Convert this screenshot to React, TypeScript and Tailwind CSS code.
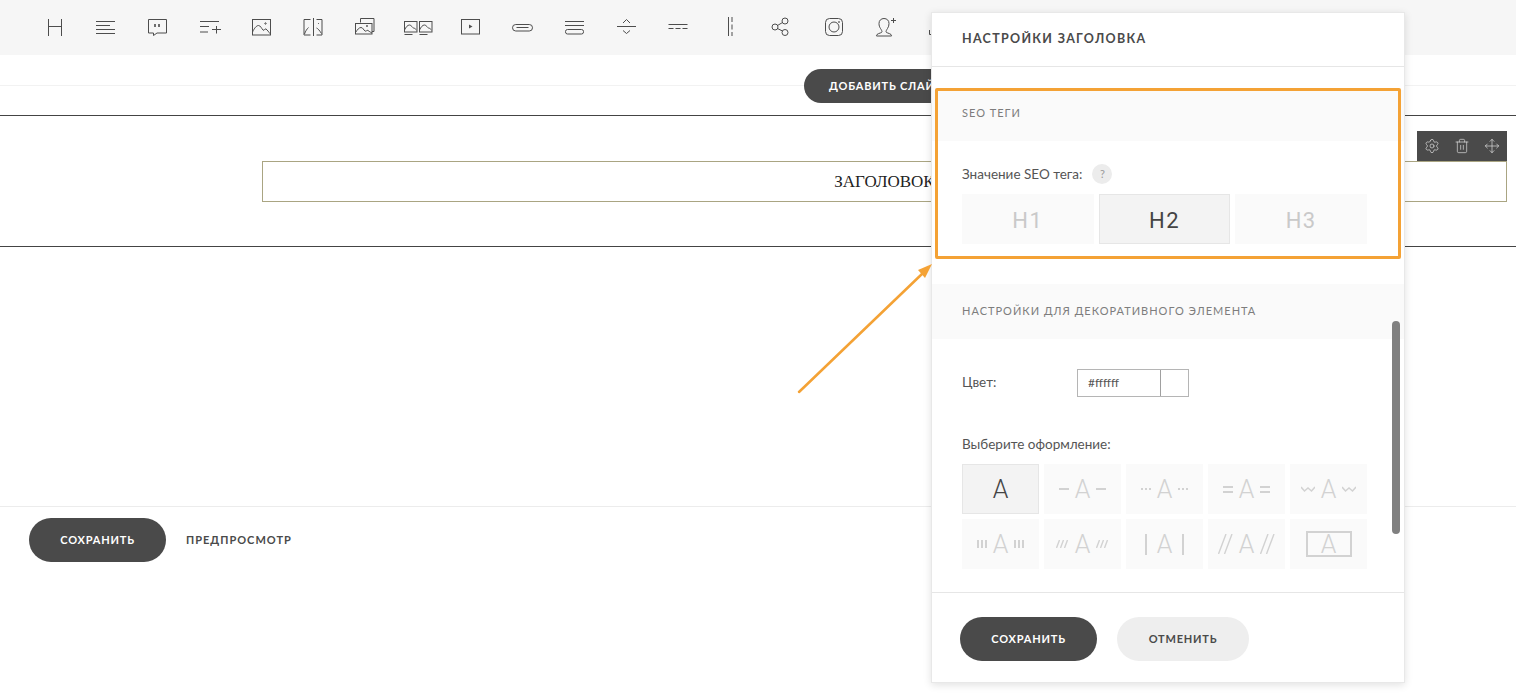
import { Settings, Trash2, Move } from 'lucide-react';
import type { ReactNode } from 'react';

const tools: { width: string; icon: ReactNode }[] = [
  { width: 'w-[50px]', icon: <path d="M5.500 3v17M18.500 3v17M5.500 10.500h13" /> },
  { width: 'w-[52px]', icon: <path d="M3 5.500h19M3 9.500h14M3 13.500h19M3 17.500h19" /> },
  {
    width: 'w-[52px]',
    icon: (
      <>
        <path d="M3.500 3.500h18v13.500H12l-3.500 2.500V17h-5z" />
        <path d="M10 8v3M14 8v3" strokeWidth="1.600" />
      </>
    ),
  },
  { width: 'w-[53px]', icon: <path d="M3 5.500h19M3 10.500h9M3 16h8M15 13.500h9M19.500 10v7.500" /> },
  {
    width: 'w-[51px]',
    icon: (
      <>
        <rect x="2.500" y="3.500" width="18" height="15.500" />
        <path d="M2.500 16c2-4 4-6.500 6-6.500s3 3 4.500 4.500 1.500-2 3-1 2.500 3 4.500 5" />
        <circle cx="15.500" cy="7.500" r="0.700" />
      </>
    ),
  },
  {
    width: 'w-[51px]',
    icon: (
      <>
        <path d="M12.500 2v18" />
        <path d="M9.500 3.500h-6.500V19H9.500M15.500 3.500h5.500V19h-5.500" />
        <path d="M3.500 18c1-3 2.500-5 4-6.500M15.500 12c1.500.5 3 2.500 5 5.500M17 7.500h.8" />
      </>
    ),
  },
  {
    width: 'w-[53px]',
    icon: (
      <>
        <path d="M8.500 6.500V2.500h13.500v13h-2" />
        <rect x="3.500" y="7.500" width="16.500" height="10.500" />
        <path d="M3.500 16.500c2-3 3.500-5 5.500-5s2.500 2.500 4 3.500 1.500-1.500 3-.5 2 1.500 4 2.500" />
        <circle cx="15" cy="10" r="0.600" />
      </>
    ),
  },
  {
    width: 'w-[53px]',
    icon: (
      <>
        <rect x="-0.500" y="5.500" width="12.500" height="10.500" />
        <rect x="14.500" y="5.500" width="12.500" height="10.500" />
        <path d="M-0.500 14c1.500-3 3-5 5-5s3 3 4 3 2 1 3 2M14.500 14c1.500-3 3-5 5-5s3 3 4 3 2 1 3 2M-0.500 18.500h8M14.500 18.500h8" />
      </>
    ),
  },
  {
    width: 'w-[52px]',
    icon: (
      <>
        <rect x="3.500" y="3.500" width="18" height="14.500" />
        <path d="M11 8.500v4l3.500-2z" fill="#4d4d4d" stroke="none" />
      </>
    ),
  },
  {
    width: 'w-[52px]',
    icon: (
      <>
        <rect x="2.500" y="8.500" width="20" height="6.500" rx="3.250" />
        <path d="M6.500 11.500h12" />
      </>
    ),
  },
  {
    width: 'w-[52px]',
    icon: (
      <>
        <path d="M3 5.500h19M3 9.500h19" />
        <rect x="3.500" y="13.500" width="18" height="4.500" rx="2" />
      </>
    ),
  },
  { width: 'w-[52px]', icon: <path d="M3 10.500h19M9 7l3.500-3.500L16 7M9 14.500l3.500 3L16 14.500" /> },
  { width: 'w-[52px]', icon: <path d="M2.500 8.500h19M2.500 12.500h5M9.500 12.500h5M16.500 12.500h5" /> },
  { width: 'w-[51px]', icon: <path d="M10.500 1v19M14 1v5M14 8.500v5M14 16v4" /> },
  {
    width: 'w-[53px]',
    icon: (
      <>
        <circle cx="16" cy="5" r="3" />
        <circle cx="6" cy="11" r="3" />
        <circle cx="16" cy="16.500" r="3" />
        <path d="M8.500 9.500l5-3M8.500 12.500l5 2.500" />
      </>
    ),
  },
  {
    width: 'w-[51px]',
    icon: (
      <>
        <rect x="3.500" y="2.500" width="17" height="17" rx="4" />
        <circle cx="12" cy="11" r="5" />
        <circle cx="17" cy="6" r="0.500" />
      </>
    ),
  },
  {
    width: 'w-[52px]',
    icon: (
      <>
        <path d="M9 16c0-1-.5-2-1.500-3.500C6.500 11 6 9.500 6 7.500c0-3 2-5 5-5s5 2 5 5c0 2-.5 3.500-1.500 5S13 15 13 16c0 .8 3 1 5 2.500.5.500.5 1 .5 1.500h-15c0-.5 0-1 .5-1.500C6 17 9 16.800 9 16z" />
        <path d="M20.500 2v5M18 4.500h5" />
      </>
    ),
  },
  { width: 'w-[24px]', icon: <path d="M4.500 14v4.500h3" /> },
];

function H({ label, active }: { label: string; active?: boolean }) {
  return (
    <div
      className={`h-[50px] flex-1 flex items-center justify-center pt-[2px] text-[22px] tracking-[1.500px] font-['Roboto',sans-serif] border ${
        active ? 'bg-[#f3f3f3] border-[#e6e6e6] text-[#444444] font-normal' : 'bg-[#fafafa] border-[#fafafa] text-[#c9c9c9] font-normal'
      }`}
    >
      {label}
    </div>
  );
}

function Deco({ active, left, right, boxed, gap }: { active?: boolean; left?: ReactNode; right?: ReactNode; boxed?: boolean; gap?: string }) {
  return (
    <div
      className={`h-[50px] flex items-center justify-center border font-['Roboto',sans-serif] font-light text-[25px] ${gap ?? 'gap-[6px]'} ${
        active ? 'bg-[#f3f3f3] border-[#e6e6e6] text-[#444444]' : 'bg-[#fafafa] border-[#fafafa] text-[#d2d2d2]'
      }`}
    >
      {left}
      {boxed ? (
        <span className="w-[46px] h-[26px] border-2 border-[#d2d2d2] flex items-center justify-center leading-none">A</span>
      ) : (
        <span className="leading-none">A</span>
      )}
      {right}
    </div>
  );
}

const dash = <span className="w-[10px] h-[2px] bg-[#d2d2d2]" />;
const dots = (
  <svg width="10" height="2" viewBox="0 0 10 2" fill="#d2d2d2">
    <rect x="0" width="2" height="2" />
    <rect x="4" width="2" height="2" />
    <rect x="8" width="2" height="2" />
  </svg>
);
const equal = <span className="w-[10px] h-[7px] border-y-2 border-[#d2d2d2]" />;
const wave = (
  <svg width="14" height="7" viewBox="0 0 14 7" fill="none" stroke="#d2d2d2" strokeWidth="1.500">
    <path d="M0 1l3.500 4L7 2l3.500 3L14 1" />
  </svg>
);
const bars = (
  <svg width="10" height="8" viewBox="0 0 10 8" fill="#d2d2d2">
    <rect x="0" width="2" height="8" />
    <rect x="4" width="2" height="8" />
    <rect x="8" width="2" height="8" />
  </svg>
);
const ticks = (
  <svg width="13" height="8" viewBox="0 0 13 8" fill="none" stroke="#d2d2d2" strokeWidth="1.400">
    <path d="M0.500 8l3-8M4.500 8l3-8M8.500 8l3-8" />
  </svg>
);
const pipe = <span className="w-[2px] h-[21px] bg-[#d2d2d2]" />;
const slashes = (
  <svg width="15" height="20" viewBox="0 0 15 20" fill="none" stroke="#d2d2d2" strokeWidth="1.400">
    <path d="M0.500 20L8 0M6.500 20L14 0" />
  </svg>
);

export default function App() {
  return (
    <div className="relative w-[1516px] h-[695px] overflow-hidden bg-white font-['Lato',sans-serif] text-[#4a4a4a]">
      {/* top toolbar */}
      <div className="h-[55px] bg-[#f6f6f6] flex items-start pt-[16px] pl-[43px]">
        {tools.map((tool, i) => (
          <div key={i} className={`${tool.width} shrink-0`}>
            <svg className="overflow-visible" width="24" height="24" viewBox="0 0 24 24" fill="none" stroke="#4d4d4d" strokeWidth="1">
              {tool.icon}
            </svg>
          </div>
        ))}
      </div>

      {/* slider row */}
      <div className="relative h-[61px] border-b border-[#444444]">
        <div className="h-[31px] border-b border-[#f2f2f2]" />
        <button className="absolute left-[804px] top-[14px] h-[34px] w-[170px] rounded-full bg-[#4a4a4a] text-white text-[11px] font-bold tracking-[0.800px] text-left pl-[25px]">
          ДОБАВИТЬ СЛАЙДЕР
        </button>
      </div>

      {/* heading block */}
      <div className="h-[131px] border-b border-[#444444] pt-[45px] pl-[262px] pr-[9px]">
        <div className="relative h-[41px] border border-[#aaa582] flex items-center justify-center font-['Liberation_Serif',serif] text-[17px] text-[#222222]">
          ЗАГОЛОВОК
          <div className="absolute right-[-1px] top-[-31px] w-[90px] h-[30px] bg-[#4a4a4a] flex items-center justify-center gap-[14px] text-[#e4e4e4]">
            <Settings size={16} strokeWidth={1} />
            <Trash2 size={16} strokeWidth={1} />
            <Move size={16} strokeWidth={1} />
          </div>
        </div>
      </div>

      <div className="h-[260px] border-b border-[#ececec]" />

      <div className="flex items-center pl-[29px] pt-[11px]">
        <button className="w-[137px] h-[44px] rounded-full bg-[#4a4a4a] text-white text-[11px] font-bold tracking-[0.800px]">СОХРАНИТЬ</button>
        <span className="ml-[20px] text-[11px] font-bold tracking-[1px] text-[#4a4a4a]">ПРЕДПРОСМОТР</span>
      </div>

      {/* heading settings panel */}
      <div className="absolute left-[931px] top-[12px] w-[474px] h-[671px] bg-white border border-[#e8e8e8] shadow-[0_2px_8px_rgba(0,0,0,0.12)] flex flex-col">
        <div className="h-[54px] shrink-0 border-b border-[#e6e6e6] pl-[30px] flex items-center text-[12.500px] font-bold tracking-[1.300px] text-[#4a4a4a]">
          НАСТРОЙКИ ЗАГОЛОВКА
        </div>
        <div className="relative flex-1 overflow-hidden">
          <div className="mt-[23px] h-[51px] bg-[#fafafa] pl-[30px] pb-[4px] flex items-center text-[11px] tracking-[1px] text-[#7d7d7d]">
            SEO ТЕГИ
          </div>
          <div className="pl-[30px] pr-[37px]">
            <div className="mt-[22px] h-[22px] flex items-center text-[13.500px] text-[#555555]">
              Значение SEO тега:
              <span className="ml-[10px] w-[20px] h-[20px] rounded-full bg-[#ececec] text-[#9a9a9a] text-[11px] flex items-center justify-center">?</span>
            </div>
            <div className="mt-[9px] flex gap-[5px]">
              <H label="H1" />
              <H label="H2" active />
              <H label="H3" />
            </div>
          </div>

          <div className="mt-[40px] h-[55px] bg-[#fafafa] pl-[30px] flex items-center text-[11px] tracking-[1px] text-[#7d7d7d]">
            НАСТРОЙКИ ДЛЯ ДЕКОРАТИВНОГО ЭЛЕМЕНТА
          </div>
          <div className="pl-[30px] pr-[37px]">
            <div className="mt-[30px] flex items-center h-[28px] text-[13.500px] text-[#555555]">
              <span className="w-[115px] pb-[2px]">Цвет:</span>
              <div className="w-[112px] h-[28px] border border-[#b5b5b5] flex">
                <span className="flex-1 pl-[10px] text-[12px] flex items-center">#ffffff</span>
                <span className="w-[28px] border-l border-[#a0a0a0]" />
              </div>
            </div>
            <div className="mt-[37px] text-[13.500px] leading-[20px] text-[#555555]">Выберите оформление:</div>
            <div className="mt-[10px] grid grid-cols-5 gap-[5px]">
              <Deco active />
              <Deco left={dash} right={dash} />
              <Deco left={dots} right={dots} />
              <Deco left={equal} right={equal} />
              <Deco left={wave} right={wave} />
              <Deco left={bars} right={bars} />
              <Deco left={ticks} right={ticks} />
              <Deco left={pipe} right={pipe} gap="gap-[10px]" />
              <Deco left={slashes} right={slashes} />
              <Deco boxed />
            </div>
          </div>
          <div className="absolute right-[4px] top-[254px] w-[8px] h-[213px] rounded-full bg-[#808080]" />
        </div>
        <div className="h-[90px] shrink-0 border-t border-[#e6e6e6] pl-[28px] pt-[24px] flex gap-[20px]">
          <button className="w-[137px] h-[44px] rounded-full bg-[#4a4a4a] text-white text-[11px] font-bold tracking-[0.800px]">СОХРАНИТЬ</button>
          <button className="w-[132px] h-[44px] rounded-full bg-[#eeeeee] text-[#4a4a4a] text-[11px] font-bold tracking-[0.800px]">ОТМЕНИТЬ</button>
        </div>
      </div>

      {/* orange highlight and arrow */}
      <div className="absolute left-[935px] top-[88px] w-[466px] h-[171px] border-[3px] border-[#f4a235] rounded-[2px] pointer-events-none" />
      <svg className="absolute left-[790px] top-[255px] pointer-events-none" width="150" height="145" viewBox="0 0 150 145" fill="none">
        <path d="M9 137L133 18" stroke="#f4a235" strokeWidth="2.500" strokeLinecap="round" />
        <path d="M142 9L128 15L135 23z" fill="#f4a235" />
      </svg>
    </div>
  );
}
